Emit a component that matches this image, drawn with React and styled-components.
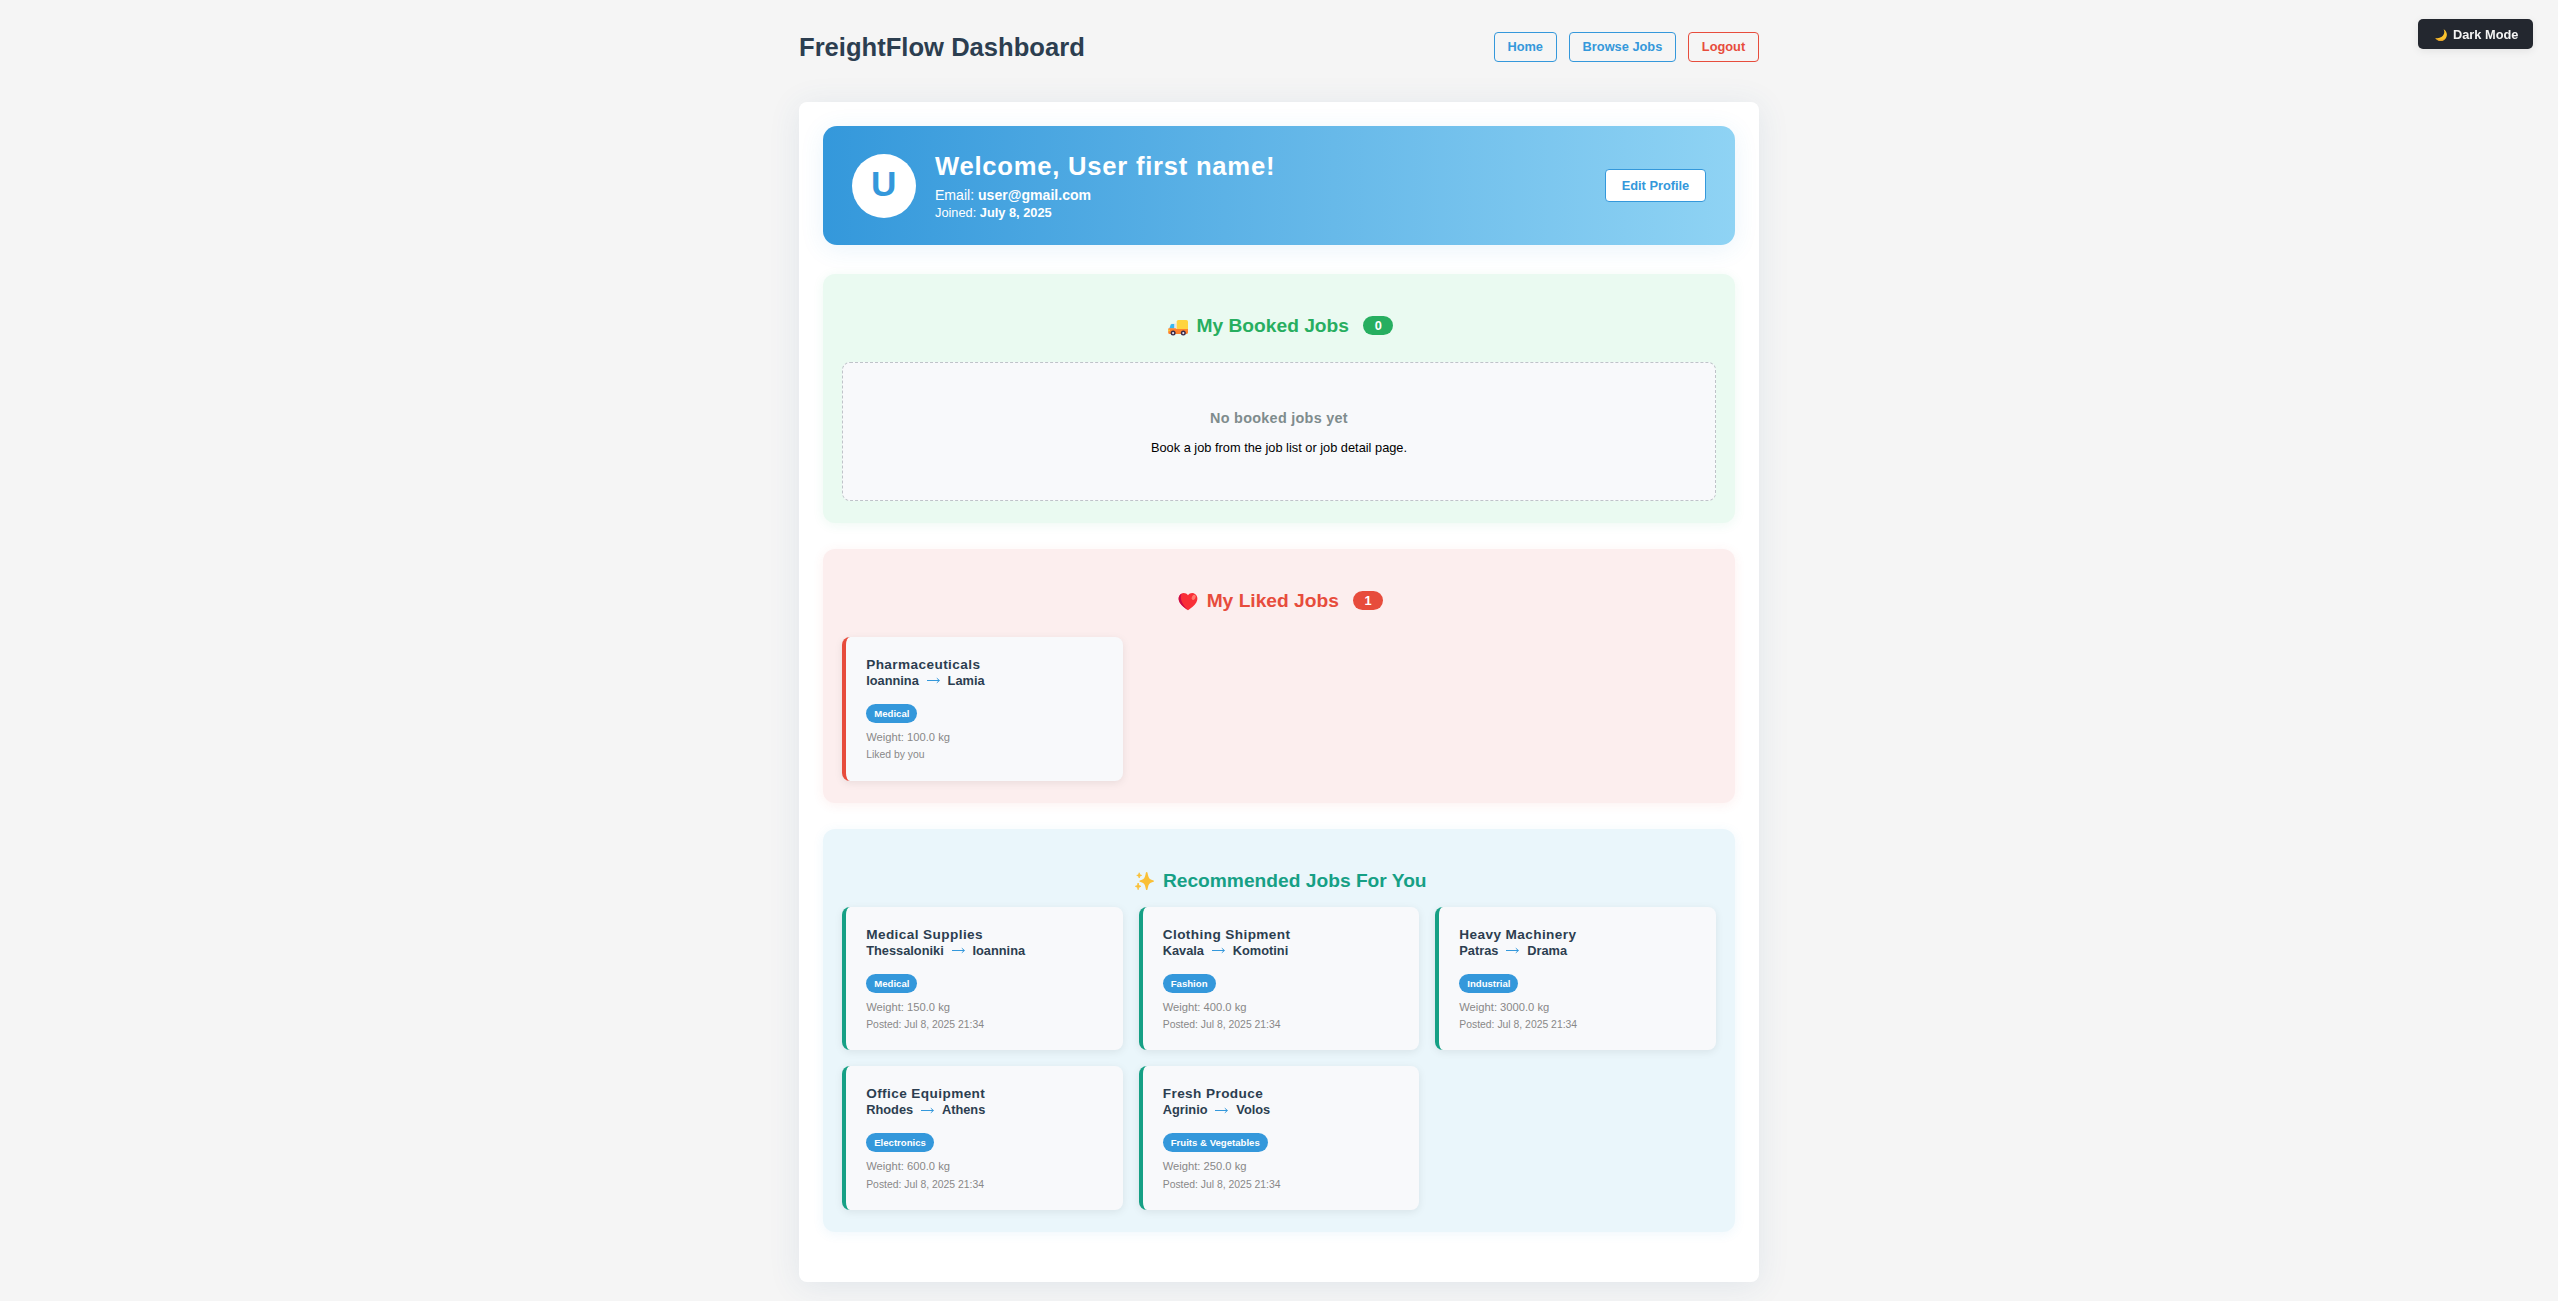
import React from "react";
import styled, { createGlobalStyle } from "styled-components";

const GlobalStyle = createGlobalStyle`
  *, *::before, *::after { box-sizing: border-box; }
  body {
    margin: 0;
    background: #f5f5f5;
    color: #000;
    font-family: "Liberation Sans", Arial, sans-serif;
    overflow: hidden;
  }
  h1, h2, h3, p { margin: 0; }
`;

const Page = styled.div`
  width: 960px;
  height: 1301px;
  margin: 0 auto;
`;

const Header = styled.header`
  display: flex;
  justify-content: space-between;
  align-items: center;
  height: 30px;
  margin: 32px 0 40px;
`;

const PageTitle = styled.h1`
  font-size: 25.6px;
  line-height: 30px;
  color: #2c3e50;
`;

const Nav = styled.nav`
  display: flex;
  gap: 12px;
`;

const NavButton = styled.button`
  height: 30px;
  padding: 0 12.8px;
  border: 1px solid ${(p) => p.$color};
  border-radius: 4px;
  background: transparent;
  color: ${(p) => p.$color};
  font: bold 12.8px/28px "Liberation Sans", Arial, sans-serif;
  white-space: nowrap;
`;

const ThemeToggle = styled.button`
  position: fixed;
  top: 19px;
  right: 25px;
  display: flex;
  align-items: center;
  gap: 5px;
  height: 30px;
  width: 115px;
  padding: 1px 0 0 16px;
  border: 0;
  border-radius: 5px;
  background: #23272f;
  color: #f5f5f5;
  box-shadow: 0 2px 8px rgba(0, 0, 0, 0.08);
  font: bold 12.8px/15px "Liberation Sans", Arial, sans-serif;
  white-space: nowrap;
`;

const Container = styled.main`
  padding: 24px 24px 49.6px;
  border-radius: 8px;
  background: #fff;
  box-shadow: 0 4px 32px rgba(52, 100, 150, 0.1);
`;

const Banner = styled.section`
  display: flex;
  align-items: center;
  height: 119px;
  margin-bottom: 28.8px;
  padding: 0 28.8px;
  border-radius: 14px;
  background: linear-gradient(90deg, #3498db 0%, #8fd3f4 100%);
  box-shadow: 0 4px 24px rgba(52, 152, 219, 0.1);
`;

const Avatar = styled.div`
  display: flex;
  align-items: center;
  justify-content: center;
  width: 64px;
  height: 64px;
  margin-right: 19.2px;
  padding-bottom: 3px;
  border-radius: 50%;
  background: #fff;
  color: #3498db;
  font-size: 35.2px;
  font-weight: bold;
`;

const UserInfo = styled.div`
  flex: 1;
  color: #fff;
`;

const Welcome = styled.h2`
  margin-bottom: 6.3px;
  font-size: 25.6px;
  line-height: 30px;
  letter-spacing: 0.03em;
`;

const UserLine = styled.p`
  margin-bottom: ${(p) => (p.$small ? 0 : 2.3)}px;
  font-size: ${(p) => (p.$small ? 12.8 : 14.08)}px;
  line-height: ${(p) => (p.$small ? 15 : 16)}px;
`;

const EditButton = styled.button`
  height: 33px;
  padding: 0 16px;
  border: 1px solid #3498db;
  border-radius: 4px;
  background: #fff;
  color: #3498db;
  font: bold 12.8px/31px "Liberation Sans", Arial, sans-serif;
`;

const Section = styled.section`
  padding: 40.4px 19.2px 22.4px;
  border-radius: 12px;
  background: ${(p) => p.$bg};
  box-shadow: 0 2px 12px ${(p) => p.$glow};

  & + & { margin-top: 25.6px; }
`;

const SectionTitle = styled.h2`
  display: flex;
  align-items: center;
  justify-content: center;
  height: 24px;
  margin-bottom: ${(p) => p.$gap}px;
  color: ${(p) => p.$color};
  font-size: 19.2px;
  line-height: 24px;
`;

const TitleIcon = styled.svg`
  width: ${(p) => p.$size || 20}px;
  height: ${(p) => p.$size || 20}px;
  margin: ${(p) => p.$drop}px 8.5px 0 ${(p) => p.$lead || 3}px;
`;

const CountBadge = styled.span`
  height: 19px;
  margin: 0 0 2px 14.5px;
  padding: 0 11.2px;
  border-radius: 10px;
  background: ${(p) => p.$color};
  color: #fff;
  font-size: 12.8px;
  line-height: 19px;
`;

const EmptyState = styled.div`
  height: 139.2px;
  padding-top: 47.2px;
  border: 1px dashed #bfc3c9;
  border-radius: 8px;
  background: #f8f9fb;
  text-align: center;
`;

const EmptyTitle = styled.h3`
  margin-bottom: 12.6px;
  color: #7f8c8d;
  font-size: 14.4px;
  line-height: 17px;
  letter-spacing: 0.02em;
`;

const EmptyText = styled.p`
  font-size: 12.8px;
  line-height: 15px;
`;

const CardGrid = styled.div`
  display: grid;
  grid-template-columns: repeat(3, 1fr);
  gap: 16px;
`;

const Card = styled.article`
  height: 143.6px;
  padding: 20px;
  border-left: 4px solid ${(p) => p.$accent};
  border-radius: 8px;
  background: #f8f9fb;
  box-shadow: 0 2px 8px rgba(0, 0, 0, 0.08);
`;

const JobTitle = styled.h3`
  color: #2c3e50;
  font-size: 13.6px;
  line-height: 16px;
  letter-spacing: 0.03em;
`;

const Route = styled.p`
  display: flex;
  align-items: center;
  color: #2c3e50;
  font-size: 12.8px;
  font-weight: bold;
  line-height: 15px;
`;

const ArrowIcon = styled.svg`
  width: 13px;
  height: 7px;
  margin: 1px 7.9px 0;
  fill: none;
  stroke: #3498db;
`;

const Category = styled.span`
  display: block;
  width: fit-content;
  height: 19px;
  margin-top: 16px;
  padding: 0 8px;
  border-radius: 10px;
  background: #3498db;
  color: #fff;
  font-size: 9.6px;
  font-weight: bold;
  line-height: 19px;
`;

const Weight = styled.p`
  margin-top: 8px;
  color: #888;
  font-size: 11.2px;
  line-height: 13px;
`;

const Note = styled.p`
  margin-top: 5.4px;
  color: #888;
  font-size: 10.4px;
  line-height: 12px;
`;

const Arrow = () => (
  <ArrowIcon viewBox="0 0 13 7">
    <path d="M0 3.5H12.4M9.8 1.2L12.4 3.5L9.8 5.8" />
  </ArrowIcon>
);

const Moon = () => (
  <svg width="14" height="14" viewBox="0 0 14 14">
    <path d="M9.6 1.2C13 3.2 13.9 7.2 11.8 10.2C9.4 13.6 4.2 13.8 1.2 9.9C5 10.9 8.6 9.3 9.9 6.1C10.6 4.3 10.4 2.7 9.6 1.2Z" fill="#fbc32d" />
    <path d="M1.2 9.9C4.2 13.8 9.4 13.6 11.8 10.2C9 12.2 4.8 12 1.2 9.9Z" fill="#f0a62b" />
  </svg>
);

const Truck = () => (
  <TitleIcon $drop={4} viewBox="0 0 20 20">
    <path d="M1 10.5L2.6 6.4C2.8 5.9 3.2 5.6 3.8 5.6H8.5V11H1Z" fill="#e3e6ea" />
    <path d="M1.4 10.4L2.8 6.6C3 6.1 3.3 5.9 3.8 5.9H6.2V10.4Z" fill="#35b9f1" />
    <rect x="8.7" y="2" width="11.3" height="10" rx="1.6" fill="#ffd43f" />
    <path d="M.6 10.3H7.5L8.7 11H20V14.6C20 15.4 19.5 16 18.7 16H1.4C.6 16 .2 15.5 .2 14.8V11.5C.2 10.8 .3 10.5 .6 10.3Z" fill="#ff822d" />
    <rect x="0.2" y="11.6" width="1.6" height="1.6" fill="#fcd53f" />
    <circle cx="5.1" cy="15.1" r="2.5" fill="#3b2a4a" />
    <circle cx="15.3" cy="15.1" r="2.5" fill="#3b2a4a" />
    <circle cx="5.1" cy="15.1" r="1.1" fill="#e8e4ee" />
    <circle cx="15.3" cy="15.1" r="1.1" fill="#e8e4ee" />
  </TitleIcon>
);

const Heart = () => (
  <TitleIcon $drop={1} viewBox="0 0 20 20">
    <path d="M10 3.3C8.3 .9 5 .4 2.7 2.2C.2 4.2 0 7.6 1.7 10.4C3.5 13.3 6.9 16 10 18.2C13.1 16 16.5 13.3 18.3 10.4C20 7.6 19.8 4.2 17.3 2.2C15 .4 11.7 .9 10 3.3Z" fill="#f92f37" />
    <path d="M3.6 1.6C.5 3.3 0 7.3 1.7 10.4C3.5 13.3 6.9 16 10 18.2C6.5 14.5 .8 8.5 3.6 1.6Z" fill="#ca0b4a" />
    <ellipse cx="15.7" cy="5.3" rx="1.8" ry="2.7" transform="rotate(28 15.7 5.3)" fill="#ff7a6d" />
  </TitleIcon>
);

const Sparkles = () => (
  <TitleIcon $drop={1} $size={19} $lead={4} viewBox="0.5 0 19.5 19.5">
    <path d="M12.5 0C13.3 0 13.3 .8 13.7 2.5C14.4 5.8 15.2 7.3 18 8.1C19.3 8.5 20 8.7 20 9.3C20 9.9 19.3 10.1 18 10.5C15.2 11.3 14.4 12.8 13.7 16.1C13.3 17.8 13.3 18.6 12.5 18.6C11.7 18.6 11.7 17.8 11.3 16.1C10.6 12.8 9.8 11.3 7 10.5C5.7 10.1 5 9.9 5 9.3C5 8.7 5.7 8.5 7 8.1C9.8 7.3 10.6 5.8 11.3 2.5C11.7 .8 11.7 0 12.5 0Z" fill="#fac036" />
    <path d="M4.8 .8C5.1 2.6 5.6 3.1 7.3 3.5C5.6 3.9 5.1 4.4 4.8 6.2C4.5 4.4 4 3.9 2.3 3.5C4 3.1 4.5 2.6 4.8 .8Z" fill="#fac036" stroke="#fac036" strokeWidth="0.8" />
    <path d="M3.7 11.3C4.1 13.5 4.7 14.2 6.5 14.7C4.7 15.2 4.1 15.9 3.7 18.1C3.3 15.9 2.7 15.2 .9 14.7C2.7 14.2 3.3 13.5 3.7 11.3Z" fill="#fac036" stroke="#fac036" strokeWidth="0.9" />
  </TitleIcon>
);

const likedJobs = [
  { title: "Pharmaceuticals", from: "Ioannina", to: "Lamia", category: "Medical", weight: "100.0", note: "Liked by you" },
];

const posted = "Posted: Jul 8, 2025 21:34";
const recommendedJobs = [
  { title: "Medical Supplies", from: "Thessaloniki", to: "Ioannina", category: "Medical", weight: "150.0", note: posted },
  { title: "Clothing Shipment", from: "Kavala", to: "Komotini", category: "Fashion", weight: "400.0", note: posted },
  { title: "Heavy Machinery", from: "Patras", to: "Drama", category: "Industrial", weight: "3000.0", note: posted },
  { title: "Office Equipment", from: "Rhodes", to: "Athens", category: "Electronics", weight: "600.0", note: posted },
  { title: "Fresh Produce", from: "Agrinio", to: "Volos", category: "Fruits & Vegetables", weight: "250.0", note: posted },
];

const JobCard = ({ job, accent }) => (
  <Card $accent={accent}>
    <JobTitle>{job.title}</JobTitle>
    <Route>
      {job.from}
      <Arrow />
      {job.to}
    </Route>
    <Category>{job.category}</Category>
    <Weight>Weight: {job.weight} kg</Weight>
    <Note>{job.note}</Note>
  </Card>
);

export default function App() {
  return (
    <>
      <GlobalStyle />
      <ThemeToggle>
        <Moon />
        Dark Mode
      </ThemeToggle>
      <Page>
        <Header>
          <PageTitle>FreightFlow Dashboard</PageTitle>
          <Nav>
            <NavButton $color="#3498db">Home</NavButton>
            <NavButton $color="#3498db">Browse Jobs</NavButton>
            <NavButton $color="#e74c3c">Logout</NavButton>
          </Nav>
        </Header>
        <Container>
          <Banner>
            <Avatar>U</Avatar>
            <UserInfo>
              <Welcome>Welcome, User first name!</Welcome>
              <UserLine>Email: <b>user@gmail.com</b></UserLine>
              <UserLine $small>Joined: <b>July 8, 2025</b></UserLine>
            </UserInfo>
            <EditButton>Edit Profile</EditButton>
          </Banner>

          <Section $bg="#eafaf1" $glow="rgba(39, 174, 96, 0.08)">
            <SectionTitle $color="#27ae60" $gap={23.6}>
              <Truck />
              My Booked Jobs
              <CountBadge $color="#27ae60">0</CountBadge>
            </SectionTitle>
            <EmptyState>
              <EmptyTitle>No booked jobs yet</EmptyTitle>
              <EmptyText>Book a job from the job list or job detail page.</EmptyText>
            </EmptyState>
          </Section>

          <Section $bg="#fceeee" $glow="rgba(231, 76, 60, 0.08)">
            <SectionTitle $color="#e74c3c" $gap={23.6}>
              <Heart />
              My Liked Jobs
              <CountBadge $color="#e74c3c">1</CountBadge>
            </SectionTitle>
            <CardGrid>
              {likedJobs.map((job) => (
                <JobCard key={job.title} job={job} accent="#e74c3c" />
              ))}
            </CardGrid>
          </Section>

          <Section $bg="#eaf6fb" $glow="rgba(52, 152, 219, 0.08)">
            <SectionTitle $color="#16a085" $gap={13.8}>
              <Sparkles />
              Recommended Jobs For You
            </SectionTitle>
            <CardGrid>
              {recommendedJobs.map((job) => (
                <JobCard key={job.title} job={job} accent="#16a085" />
              ))}
            </CardGrid>
          </Section>
        </Container>
      </Page>
    </>
  );
}
